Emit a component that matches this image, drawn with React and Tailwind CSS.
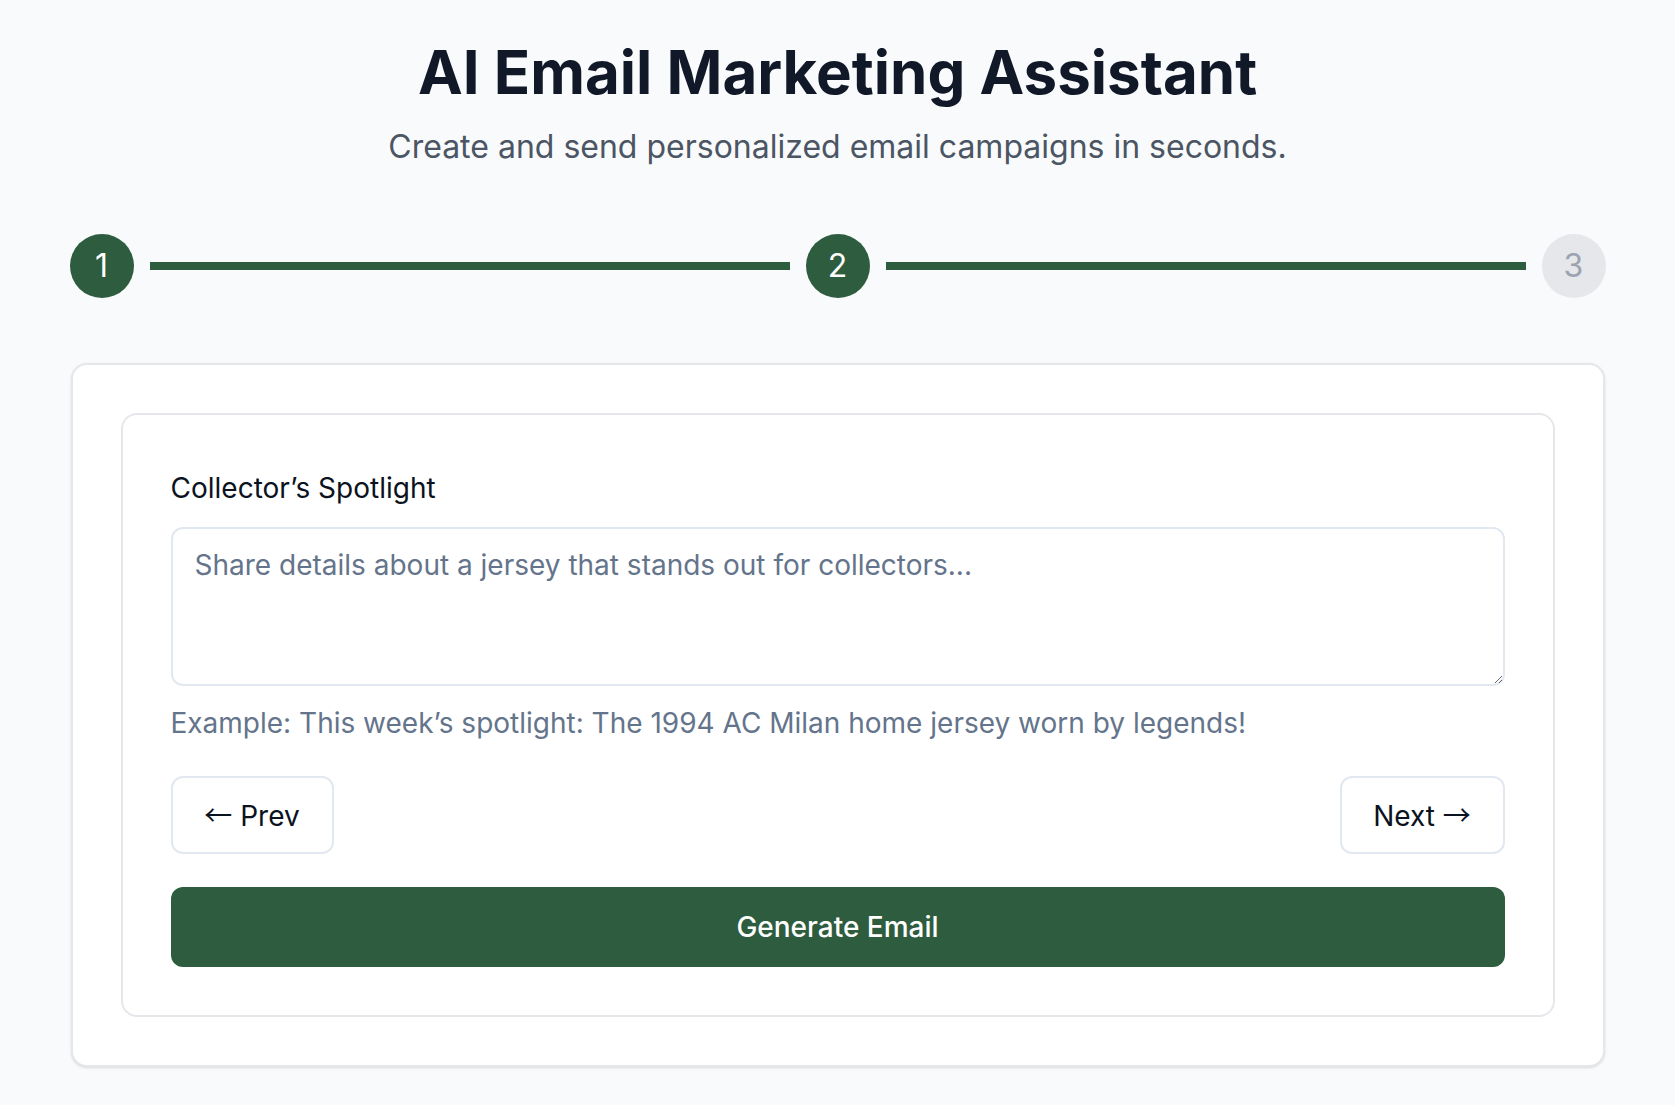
import { useState } from 'react';

const GREEN = 'bg-[#2e5c3e]';

function StepCircle({ n, active }) {
    return (
        <div
            className={
                active
                    ? 'flex h-16 w-16 shrink-0 items-center justify-center rounded-full bg-[#2e5c3e] text-[32px] text-white'
                    : 'flex h-16 w-16 shrink-0 items-center justify-center rounded-full bg-[#e5e7eb] text-[32px] text-[#9ca3af]'
            }
        >
            {n}
        </div>
    );
}

function StepLine() {
    return <div className="mx-4 h-2 flex-1 bg-[#2e5c3e]" />;
}

function Arrow({ children }) {
    return <span className="font-['Noto_Sans_CJK_SC',sans-serif]">{children}</span>;
}

export default function App() {
    const [text, setText] = useState('');

    return (
        <div className="min-h-screen bg-[#f8fafc] font-['Inter','Liberation_Sans',sans-serif]">
            <div className="mx-auto max-w-[1536px] pt-[36px] pb-10">
                <h1 className="text-center text-[60px] font-bold leading-[1.2] text-[#111827]">
                    AI Email Marketing Assistant
                </h1>
                <p className="mt-[15px] text-center text-[32px] leading-[1.5] text-[#4b5563]">
                    Create and send personalized email campaigns in seconds.
                </p>

                <div className="mt-[63px] flex items-center">
                    <StepCircle n={1} active />
                    <StepLine />
                    <StepCircle n={2} active />
                    <StepLine />
                    <StepCircle n={3} />
                </div>

                <section className="mx-px mt-[65px] rounded-2xl border-2 border-[#e5e7eb] bg-white p-12 shadow-sm">
                    <div className="rounded-2xl border-2 border-[#e5e7eb] bg-white p-12">
                        <label className="mt-1 block text-[28px] font-normal leading-[42px] text-[#0b1220]">
                            Collector’s Spotlight
                        </label>
                        <textarea
                            value={text}
                            onChange={function (e) { setText(e.target.value); }}
                            placeholder="Share details about a jersey that stands out for collectors..."
                            className="mt-[18px] block h-[159px] w-full rounded-xl border-2 border-[#e2e8f0] bg-white px-[22px] pt-[15px] pb-[9px] text-[28px] leading-[1.5] text-[#0f172a] outline-none placeholder:text-[#64748b]"
                        />
                        <p className="mt-[16px] text-[28px] leading-[1.5] text-[#64748b]">
                            Example: This week’s spotlight: The 1994 AC Milan home jersey worn by legends!
                        </p>

                        <div className="mt-[32px] flex items-center justify-between">
                            <button className="h-[78px] w-[163px] rounded-xl border-2 border-[#e2e8f0] bg-white text-[28px] leading-none text-[#0b1220]">
                                <Arrow>←</Arrow> Prev
                            </button>
                            <button className="h-[78px] w-[165px] rounded-xl border-2 border-[#e2e8f0] bg-white text-[28px] leading-none text-[#0b1220]">
                                Next <Arrow>→</Arrow>
                            </button>
                        </div>

                        <button className={'mt-[33px] h-20 w-full rounded-xl text-[28px] font-medium text-white ' + GREEN}>
                            Generate Email
                        </button>
                    </div>
                </section>
            </div>
        </div>
    );
}
